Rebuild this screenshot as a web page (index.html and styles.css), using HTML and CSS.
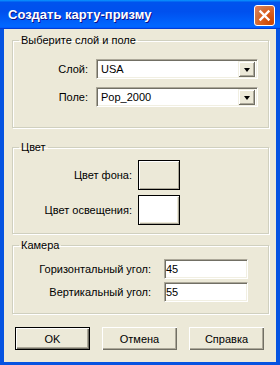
FILE: index.html
```html
<!DOCTYPE html>
<html lang="ru">
  <head>
    <meta charset="UTF-8" />
    <meta name="viewport" content="width=device-width, initial-scale=1.0" />
    <title>Создать карту-призму</title>
    <link rel="stylesheet" href="styles.css">
  </head>
  <body>
    <div class="window">
      <div class="titlebar">
        <span class="title">Создать карту-призму</span>
        <button class="close" aria-label="Закрыть">
          <svg width="13" height="13" viewBox="0 0 13 13">
            <path d="M2.5 2.5 L10.5 10.5 M10.5 2.5 L2.5 10.5" stroke="#fff" stroke-width="2.4" stroke-linecap="square" />
          </svg>
        </button>
      </div>

      <div class="frame">
        <div class="client">
          <fieldset class="group">
            <legend>Выберите слой и поле</legend>
            <div class="rows rows-layer">
              <label>Слой:</label>
              <div class="combo">
                <span class="combo-value">USA</span>
                <span class="drop"><span class="arrow"></span></span>
              </div>
              <label>Поле:</label>
              <div class="combo">
                <span class="combo-value">Pop_2000</span>
                <span class="drop"><span class="arrow"></span></span>
              </div>
            </div>
          </fieldset>

          <fieldset class="group group-color">
            <legend>Цвет</legend>
            <div class="rows rows-color">
              <label>Цвет фона:</label>
              <button class="swatch swatch-bg"></button>
              <label>Цвет освещения:</label>
              <button class="swatch swatch-light"></button>
            </div>
          </fieldset>

          <fieldset class="group group-camera">
            <legend>Камера</legend>
            <div class="rows rows-camera">
              <label>Горизонтальный угол:</label>
              <input class="field" type="text" value="45" />
              <label>Вертикальный угол:</label>
              <input class="field" type="text" value="55" />
            </div>
          </fieldset>

          <div class="buttons">
            <button class="btn btn-default">OK</button>
            <button class="btn">Отмена</button>
            <button class="btn">Справка</button>
          </div>
        </div>
      </div>
    </div>
  </body>
</html>
```

FILE: styles.css
```css
body {
  margin: 0;
  font-family: "Liberation Sans", Arial, sans-serif;
  font-size: 11px;
  color: #000;
}

.window {
  width: 280px;
  height: 365px;
  display: flex;
  flex-direction: column;
}

.titlebar {
  height: 29px;
  flex-shrink: 0;
  display: flex;
  align-items: center;
  justify-content: space-between;
  padding: 0 5px 0 8px;
  background: linear-gradient(180deg, #0997ff, #0053ee 8%, #0050ee 40%, #0066ff 88%, #0066ff 93%, #005bff 95%, #003dd7 96%, #003dd7);
  box-sizing: border-box;
}

.title {
  color: #fff;
  font-weight: bold;
  font-size: 13px;
  text-shadow: 1px 1px #0f1089;
  letter-spacing: 0;
}

.close {
  width: 21px;
  height: 21px;
  padding: 0;
  margin-top: 1px;
  border: 1px solid #fff;
  border-radius: 3px;
  background: radial-gradient(circle at 85% 85%, #cc4600 0%, #dc6527 55%, #cd7546 70%, transparent 90%), #e67a53;
  display: flex;
  align-items: center;
  justify-content: center;
  box-sizing: border-box;
}

.frame {
  flex: 1;
  display: flex;
  border-style: solid;
  border-color: #0553e1;
  border-width: 0 4px 3px 4px;
  box-shadow: inset 1px 0 #0831d9, inset -1px -1px #00138c;
}

.client {
  flex: 1;
  background-color: #ece9d8;
  padding: 5px 7px 0 8px;
}

.group {
  margin: 0;
  padding: 12px 0 20px 0;
  border: 1px solid #d0d0bf;
  border-radius: 0;
  box-shadow: inset 1px 1px #fff, 1px 1px #fff;
}

.group legend {
  margin-left: 6px;
  padding: 0 2px;
  line-height: 13px;
}

.group-color {
  margin-top: 13px;
  padding: 6px 0 8px 0;
}

.group-camera {
  margin-top: 5px;
  padding: 7px 0 11px 0;
}

.rows {
  display: grid;
  align-items: center;
}

.rows label {
  text-align: right;
}

.rows-layer {
  grid-template-columns: 75px 162px;
  column-gap: 8px;
  row-gap: 8px;
}

.rows-color {
  grid-template-columns: 119px 42px;
  column-gap: 6px;
  row-gap: 5px;
}

.rows-camera {
  grid-template-columns: 138px 84px;
  column-gap: 13px;
  row-gap: 3px;
}

.combo {
  height: 20px;
  display: flex;
  align-items: center;
  background-color: #fff;
  border: 1px solid;
  border-color: #aca899 #fff #fff #aca899;
  box-shadow: inset 1px 1px #716f64, inset -1px -1px #f1efe2;
  padding: 2px;
  box-sizing: border-box;
}

.combo-value {
  flex: 1;
  padding-left: 2px;
}

.drop {
  width: 17px;
  height: 16px;
  display: flex;
  align-items: center;
  justify-content: center;
  background-color: #ece9d8;
  box-shadow: inset 1px 1px #f1efe2, inset -1px -1px #716f64, inset 2px 2px #fff, inset -2px -2px #aca899;
}

.arrow {
  width: 0;
  height: 0;
  margin-top: 1px;
  border-left: 3.5px solid transparent;
  border-right: 3.5px solid transparent;
  border-top: 4px solid #000;
}

.swatch {
  height: 30px;
  padding: 0;
  border: 1px solid #000;
  box-shadow: inset 1px 1px #fff, inset -1px -1px #aca899, inset -2px -2px #ece9d8;
}

.swatch-bg {
  background-color: #ece9d8;
}

.swatch-light {
  background-color: #fff;
}

.field {
  height: 20px;
  margin: 0;
  padding: 0 0 0 1px;
  font: inherit;
  background-color: #fff;
  border: 1px solid;
  border-color: #aca899 #fff #fff #aca899;
  box-shadow: inset 1px 1px #716f64, inset -1px -1px #f1efe2;
  box-sizing: border-box;
  outline: none;
}

.buttons {
  display: flex;
  gap: 12px;
  margin-top: 13px;
  padding-left: 3px;
}

.btn {
  width: 75px;
  height: 23px;
  padding: 0;
  font: inherit;
  color: #000;
  background-color: #ece9d8;
  border: none;
  box-shadow: inset 1px 1px #fff, inset -1px -1px #716f64, inset -2px -2px #aca899;
}

.btn-default {
  border: 1px solid #000;
  box-shadow: inset 1px 1px #fff, inset -1px -1px #716f64, inset -2px -2px #aca899;
}
```
